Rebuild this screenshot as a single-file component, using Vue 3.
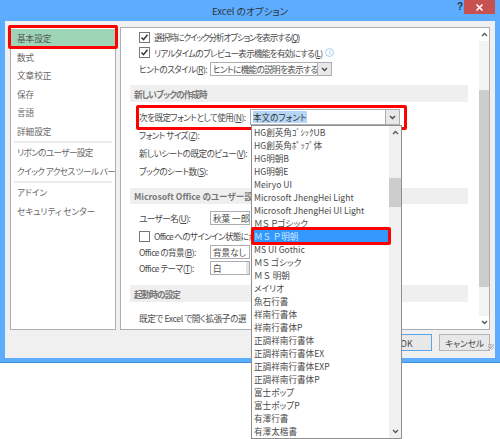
<script setup>
const navGroups = [
  ['基本設定', '数式', '文章校正', '保存', '言語', '詳細設定'],
  ['リボンのユーザー設定', 'クイック アクセス ツール バー'],
  ['アドイン', 'セキュリティ センター']
]

const fonts = [
  'HG創英角ｺﾞｼｯｸUB', 'HG創英角ﾎﾟｯﾌﾟ体', 'HG明朝B', 'HG明朝E', 'Meiryo UI',
  'Microsoft JhengHei Light', 'Microsoft JhengHei UI Light', 'ＭＳ Ｐゴシック', 'ＭＳ Ｐ明朝',
  'MS UI Gothic', 'ＭＳ ゴシック', 'ＭＳ 明朝', 'メイリオ', '魚石行書', '祥南行書体', '祥南行書体P',
  '正調祥南行書体', '正調祥南行書体EX', '正調祥南行書体EXP', '正調祥南行書体P', '富士ポップ',
  '富士ポップP', '有澤行書', '有澤太楷書'
]
const selectedFont = 'ＭＳ Ｐ明朝'
// ＭＳ 明朝系は全角幅のまま
const isFullWidth = (f) => f.startsWith('Ｍ') && f.endsWith('明朝')
</script>

<template>
  <div class="page">
    <div class="window">
      <header class="titlebar">
        <span class="title">Excel のオプション</span>
        <span class="help">?</span>
        <span class="close">
          <svg width="9" height="9" viewBox="0 0 9 9"><path d="M1.5 1.5l6 6M7.5 1.5l-6 6" stroke="#fff" stroke-width="1.6" /></svg>
        </span>
      </header>

      <div class="inner">
        <div class="panels">
          <nav class="nav">
            <div v-for="(group, i) in navGroups" :key="i" class="nav-group">
              <div v-for="item in group" :key="item" class="nav-item" :class="{ active: item === '基本設定' }">{{ item }}</div>
            </div>
          </nav>

          <main class="main">
            <div class="content">
              <div class="row h16 mt1">
                <span class="check on"><svg width="9" height="9" viewBox="0 0 9 9"><path d="M1.5 4.5l2 2.2 4-5" fill="none" stroke="#333" stroke-width="1.5" /></svg></span>
                <span class="tight-1">選択時にクイック分析オプションを表示する(<u>Q</u>)</span>
              </div>
              <div class="row h15">
                <span class="check on"><svg width="9" height="9" viewBox="0 0 9 9"><path d="M1.5 4.5l2 2.2 4-5" fill="none" stroke="#333" stroke-width="1.5" /></svg></span>
                <span class="tight-2">リアルタイムのプレビュー表示機能を有効にする(<u>L</u>)</span>
                <span class="info">i</span>
              </div>
              <div class="row h16 mt1">
                <span class="label">ヒントのスタイル(<u>R</u>):</span>
                <span class="combo hint">
                  <span class="combo-text">ヒントに機能の説明を表示する</span>
                  <span class="combo-btn"><svg width="7" height="5" viewBox="0 0 7 5"><path d="M1 1l2.5 2.5L6 1" fill="none" stroke="#444" stroke-width="1.3" /></svg></span>
                </span>
              </div>

              <div class="section jp mt8 h17">新しいブックの作成時</div>
              <div class="row h16 mt7">
                <span class="label">次を既定フォントとして使用(<u>N</u>):</span>
                <span class="combo font-combo">
                  <span class="combo-text"><span class="picked">本文のフォント</span></span>
                  <span class="combo-btn"><svg width="7" height="5" viewBox="0 0 7 5"><path d="M1 1l2.5 2.5L6 1" fill="none" stroke="#444" stroke-width="1.3" /></svg></span>
                </span>
              </div>
              <div class="row h18 mt1"><span class="label">フォント サイズ(<u>Z</u>):</span></div>
              <div class="row h17"><span class="label">新しいシートの既定のビュー(<u>V</u>):</span></div>
              <div class="row h16 mt2"><span class="label">ブックのシート数(<u>S</u>):</span></div>

              <div class="section mt9 h16">Microsoft Office のユーザー設定</div>
              <div class="row h16 mt6">
                <span class="label">ユーザー名(<u>U</u>):</span>
                <span class="combo plain">秋葉 一郎</span>
              </div>
              <div class="row h16 mt2">
                <span class="check"></span>
                <span class="tight-3">Office へのサインイン状態にか</span>
              </div>
              <div class="row h16">
                <span class="label">Office の背景(<u>B</u>):</span>
                <span class="combo plain">背景なし</span>
              </div>
              <div class="row h16">
                <span class="label">Office テーマ(<u>T</u>):</span>
                <span class="combo plain">白<span class="stub"></span></span>
              </div>

              <div class="section jp mt9 h17">起動時の設定</div>
              <div class="row h16 mt8"><span class="label wide">既定で Excel で開く拡張子の選</span></div>
            </div>

            <div class="scrollbar">
              <svg class="arrow" width="7" height="5" viewBox="0 0 7 5"><path d="M1 4l2.5-2.5L6 4" fill="none" stroke="#555" stroke-width="1.3" /></svg>
              <div class="track"><div class="thumb"></div></div>
              <svg class="arrow" width="7" height="5" viewBox="0 0 7 5"><path d="M1 1l2.5 2.5L6 1" fill="none" stroke="#555" stroke-width="1.3" /></svg>
            </div>
          </main>
        </div>

        <footer class="footer">
          <button class="btn ok">OK</button>
          <button class="btn">キャンセル</button>
          <span class="grip"></span>
        </footer>
      </div>

      <!-- 赤枠 -->
      <div class="mark mark-nav"></div>
      <div class="mark mark-font"></div>

      <!-- 開いたドロップダウン -->
      <div class="dropdown">
        <div class="list">
          <div
            v-for="f in fonts"
            :key="f"
            class="list-item"
            :class="{ selected: f === selectedFont, 'full-width': isFullWidth(f) }"
          >{{ f }}</div>
        </div>
        <div class="list-scroll">
          <svg width="7" height="5" viewBox="0 0 7 5"><path d="M1 4l2.5-2.5L6 4" fill="none" stroke="#555" stroke-width="1.3" /></svg>
          <div class="list-track"><div class="list-thumb"></div></div>
          <svg width="7" height="5" viewBox="0 0 7 5"><path d="M1 1l2.5 2.5L6 1" fill="none" stroke="#555" stroke-width="1.3" /></svg>
        </div>
      </div>
      <div class="mark mark-item"></div>
    </div>
  </div>
</template>

<style scoped>
.page {
  width: 500px;
  height: 439px;
  overflow: hidden;
  background: #fff;
  font-family: "Noto Sans CJK JP", "Noto Sans", sans-serif;
  font-size: 8.6px;
  font-feature-settings: "palt";
  color: #4a4a4a;
}
.window {
  position: relative;
  height: 363px;
  background: #5cadff;
  display: flex;
  flex-direction: column;
  box-sizing: border-box;
  padding: 0 5px 5px;
  box-shadow: inset 0 -1px 0 #3f8fdc;
}

/* タイトルバー */
.titlebar {
  position: relative;
  height: 21px;
  flex: none;
  display: flex;
  align-items: center;
  justify-content: center;
}
.title { font-size: 9.6px; color: #333; }
.help {
  position: absolute;
  left: 452px;
  top: 1px;
  font: bold 10px "Liberation Sans", sans-serif;
  color: #333;
}
.close {
  position: absolute;
  right: 0;
  top: 0;
  width: 31px;
  height: 14px;
  background: #c75050;
  display: flex;
  align-items: center;
  justify-content: center;
}

.inner {
  flex: 1;
  background: #f0f0f0;
  display: flex;
  flex-direction: column;
  padding: 6px 5px 0;
  min-height: 0;
}
.panels {
  display: flex;
  gap: 4px;
  height: 303px;
  flex: none;
}

/* 左メニュー */
.nav {
  width: 106px;
  box-sizing: border-box;
  background: #fff;
  border: 1px solid #abadb3;
  padding-top: 1px;
  flex: none;
}
.nav-group { padding-bottom: 1px; border-bottom: 2px solid #ececec; margin: 0 3px; }
.nav-group:last-child { border-bottom: none; }
.nav-group:nth-child(2) { letter-spacing: -0.6px; }
.nav-item {
  height: 18.5px;
  line-height: 18px;
  padding-left: 6px;
  margin: 0 -3px;
  white-space: nowrap;
  overflow: hidden;
  color: #666;
}
.nav-item.active { background: #9fd5b7; color: #555; }

/* 右パネル */
.main {
  flex: 1;
  display: flex;
  box-sizing: border-box;
  background: #fff;
  border: 1px solid #abadb3;
  min-width: 0;
}
.content {
  width: 357px;
  padding-left: 9px;
  box-sizing: border-box;
}
.row {
  display: flex;
  align-items: center;
  white-space: nowrap;
  padding-left: 9px;
  overflow: hidden;
}
.h15 { height: 15px; }
.h16 { height: 16px; }
.h17 { height: 17px; }
.h18 { height: 18px; }
.mt1 { margin-top: 1px; }
.mt2 { margin-top: 2px; }
.mt6 { margin-top: 6px; }
.mt7 { margin-top: 7px; }
.mt8 { margin-top: 8px; }
.mt9 { margin-top: 9px; }
.tight-1 { letter-spacing: -1.15px; }
.tight-2 { letter-spacing: -0.75px; }
.tight-3 { letter-spacing: -0.7px; }

.check {
  width: 9px;
  height: 9px;
  border: 1px solid #777;
  background: #fff;
  margin-right: 4px;
  flex: none;
  display: flex;
  box-sizing: content-box;
}
.info {
  width: 7px;
  height: 7px;
  margin-left: 3px;
  border: 1px solid #a9cdea;
  border-radius: 50%;
  font: 7px/7px "Liberation Sans", sans-serif;
  color: #7fb2de;
  text-align: center;
}
.label { width: 71px; flex: none; letter-spacing: -0.55px; }
.label:has(+ .font-combo) { width: 111px; }
.wide { width: auto; letter-spacing: -0.4px; }
.row u { text-underline-offset: 1px; }
.section {
  width: 338px;
  box-sizing: border-box;
  background: #efefef;
  color: #777;
  font-weight: 700;
  padding-left: 4px;
  display: flex;
  align-items: center;
}
.jp { letter-spacing: -0.9px; }

.combo {
  display: flex;
  align-items: center;
  box-sizing: border-box;
  height: 14px;
  border: 1px solid #abadb3;
  background: #fff;
  padding-left: 2px;
  flex: none;
  position: relative;
}
.hint { width: 122px; letter-spacing: -0.65px; }
.font-combo { width: 150px; height: 16px; }
.plain { width: 40px; }
.combo-text { flex: 1; overflow: hidden; white-space: nowrap; }
.picked { background: #b5d7f5; color: #333; }
.combo-btn {
  width: 13px;
  align-self: stretch;
  background: #e8e8e8;
  border-left: 1px solid #abadb3;
  display: flex;
  align-items: center;
  justify-content: center;
}
.stub {
  position: absolute;
  right: 0;
  top: 0;
  bottom: 0;
  left: 35px;
  background: #e4e4e4;
}

/* スクロールバー */
.scrollbar {
  width: 10px;
  margin-left: 1px;
  display: flex;
  flex-direction: column;
  align-items: center;
}
.arrow { flex: none; margin: 4px 0; }
.track { flex: 1; width: 100%; background: #f3f3f3; padding-top: 49px; box-sizing: border-box; }
.thumb { height: 197px; background: #cdcdcd; }

/* フッター */
.footer {
  position: relative;
  display: flex;
  justify-content: flex-end;
  gap: 7px;
  padding-top: 4px;
}
.btn {
  width: 51px;
  height: 17px;
  padding: 0;
  font: inherit;
  font-feature-settings: inherit;
  color: #444;
  background: #e8e8e8;
  border: 1px solid #b5b5b5;
}
.ok { border-color: #5aa7e8; }
.grip {
  position: absolute;
  right: -4px;
  bottom: 1px;
  width: 6px;
  height: 6px;
  background: repeating-linear-gradient(135deg, #bbb 0 1px, transparent 1px 2px);
}

/* 赤枠 */
.mark {
  position: absolute;
  border: 3px solid #f00;
  border-radius: 2px;
  box-sizing: border-box;
  pointer-events: none;
}
.mark-nav { left: 8px; top: 25px; width: 110px; height: 24px; }
.mark-font { left: 136px; top: 105px; width: 271px; height: 25px; }
.mark-item { left: 251px; top: 227px; width: 140px; height: 18px; }

/* ドロップダウン */
.dropdown {
  position: absolute;
  left: 251px;
  top: 125px;
  width: 151px;
  height: 314px;
  box-sizing: border-box;
  background: #fff;
  border: 1px solid #8f8f8f;
  display: flex;
}
.list { flex: 1; min-width: 0; }
.list-item {
  height: 13px;
  line-height: 13px;
  padding-left: 2px;
  white-space: nowrap;
  overflow: hidden;
  color: #4a4a4a;
}
.list-item.full-width { font-feature-settings: normal; letter-spacing: -0.1px; }
.list-item.selected { background: #3399ff; color: #cfe6ff; }
.list-scroll {
  width: 12px;
  flex: none;
  background: #f0f0f0;
  display: flex;
  flex-direction: column;
  align-items: center;
  padding: 4px 0;
  box-sizing: border-box;
}
.list-track { flex: 1; width: 100%; padding-top: 43px; box-sizing: border-box; }
.list-thumb { height: 29px; background: #cdcdcd; }
</style>

<style>
html, body { margin: 0; background: #fff; }
</style>
